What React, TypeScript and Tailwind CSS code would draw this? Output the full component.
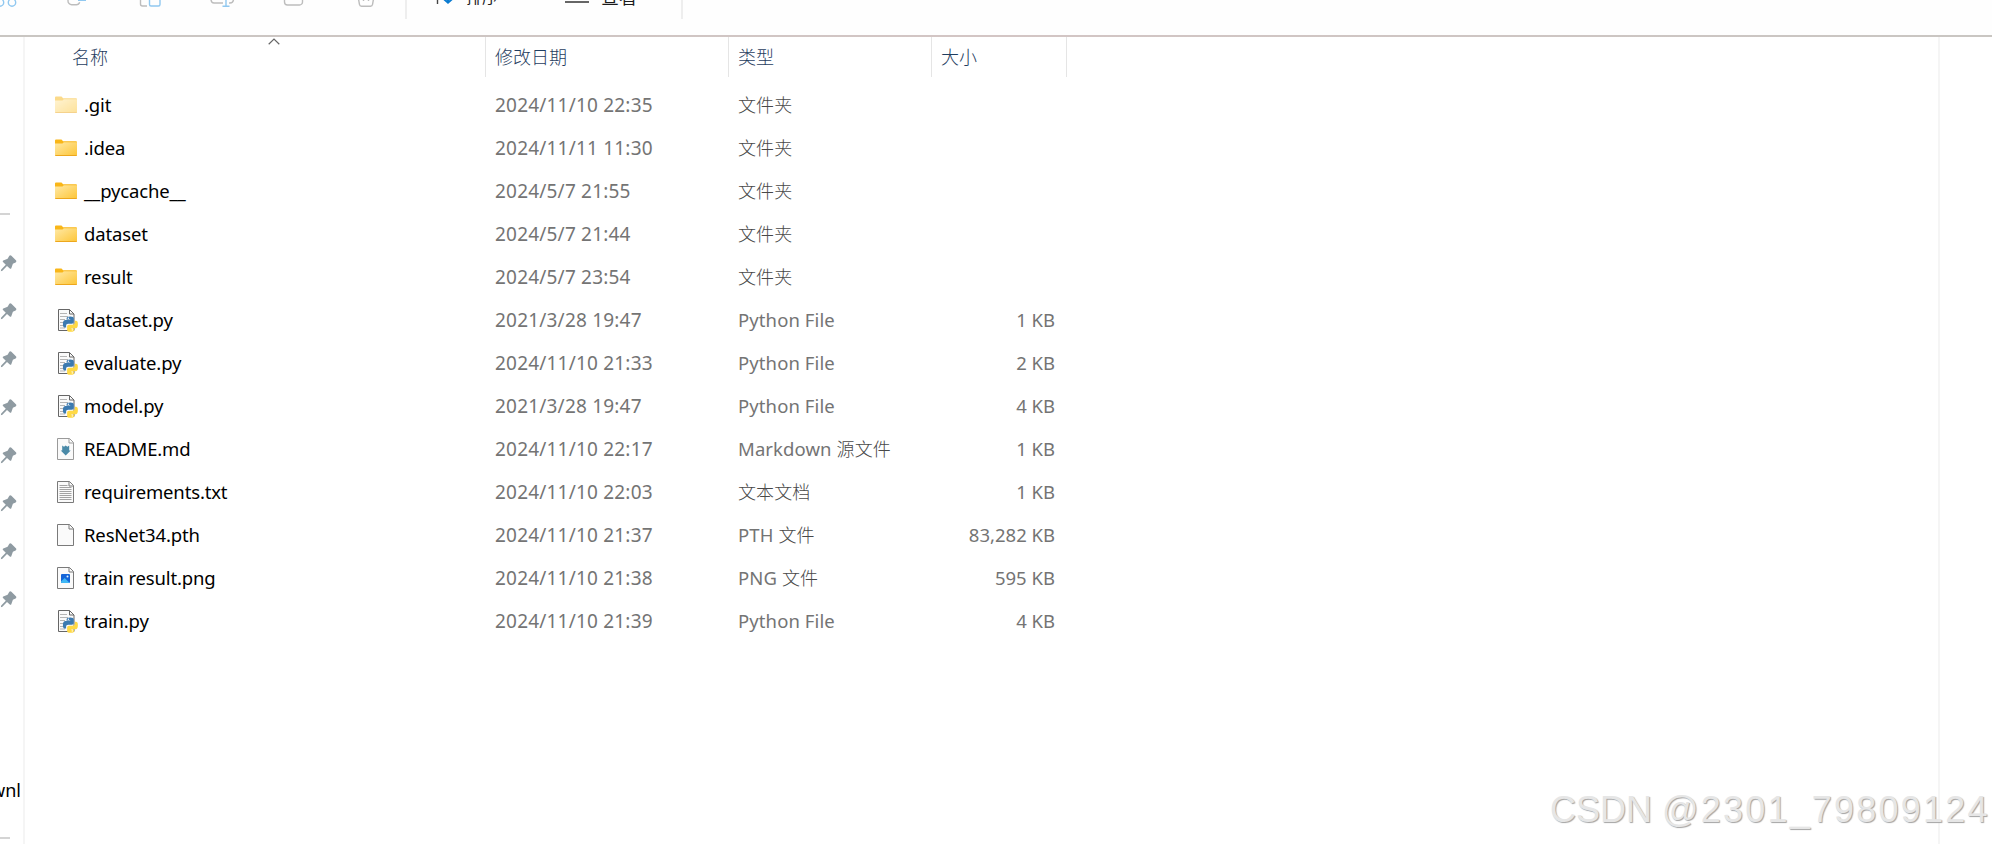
import React from "react";

type Kind = "folder" | "hidden" | "py" | "md" | "txt" | "blank" | "png";

type Entry = { name: string; date: string; type: string; suffix?: string; size?: string; kind: Kind };

const entries: Entry[] = [
  { name: ".git", date: "2024/11/10 22:35", type: "", suffix: "文件夹", kind: "hidden" },
  { name: ".idea", date: "2024/11/11 11:30", type: "", suffix: "文件夹", kind: "folder" },
  { name: "__pycache__", date: "2024/5/7 21:55", type: "", suffix: "文件夹", kind: "folder" },
  { name: "dataset", date: "2024/5/7 21:44", type: "", suffix: "文件夹", kind: "folder" },
  { name: "result", date: "2024/5/7 23:54", type: "", suffix: "文件夹", kind: "folder" },
  { name: "dataset.py", date: "2021/3/28 19:47", type: "Python File", size: "1 KB", kind: "py" },
  { name: "evaluate.py", date: "2024/11/10 21:33", type: "Python File", size: "2 KB", kind: "py" },
  { name: "model.py", date: "2021/3/28 19:47", type: "Python File", size: "4 KB", kind: "py" },
  { name: "README.md", date: "2024/11/10 22:17", type: "Markdown ", suffix: "源文件", size: "1 KB", kind: "md" },
  { name: "requirements.txt", date: "2024/11/10 22:03", type: "", suffix: "文本文档", size: "1 KB", kind: "txt" },
  { name: "ResNet34.pth", date: "2024/11/10 21:37", type: "PTH ", suffix: "文件", size: "83,282 KB", kind: "blank" },
  { name: "train result.png", date: "2024/11/10 21:38", type: "PNG ", suffix: "文件", size: "595 KB", kind: "png" },
  { name: "train.py", date: "2024/11/10 21:39", type: "Python File", size: "4 KB", kind: "py" },
];

function FolderIcon({ faded }: { faded: boolean }) {
  return (
    <svg width="24" height="24" viewBox="0 0 24 24" className={faded ? "opacity-50" : ""}>
      <defs>
        <linearGradient id="folder" x1="0" y1="0" x2="1" y2="1">
          <stop offset="0" stopColor="#ffe9a6" />
          <stop offset="1" stopColor="#fdc536" />
        </linearGradient>
      </defs>
      <path d="M1 4.500a1 1 0 0 1 1-1h5.500l1.600 1.800H22a1 1 0 0 1 1 1V12H1z" fill="#f9b618" />
      <path d="M1 7.600h7.500l1.300-1.300H23V19a1 1 0 0 1-1 1H2a1 1 0 0 1-1-1z" fill="url(#folder)" />
      <path d="M1 18.900h22a1.200 1.200 0 0 1-1.100 1.100H2.100A1.200 1.200 0 0 1 1 18.900z" fill="#eda71d" />
    </svg>
  );
}

function Page({ stroke = "#7a7a7a" }: { stroke?: string }) {
  return (
    <>
      <path d="M3.500 1.500h12l4 4v17h-16z" fill="#fafafa" stroke={stroke} />
      <path d="M15 1.500v4.500h4.500" fill="none" stroke={stroke} />
    </>
  );
}

function FileIcon({ kind }: { kind: Kind }) {
  if (kind === "folder" || kind === "hidden") return <FolderIcon faded={kind === "hidden"} />;
  if (kind === "py")
    return (
      <svg width="24" height="24" viewBox="0 0 24 24">
        <path d="M4.500 1.500h11l4.500 4.500v16.500H4.500z" fill="#fafafa" stroke="#666" />
        <path d="M15.500 1.500V6H20" fill="none" stroke="#666" />
        <path d="M6 5.500h7M6 8.500h8M6 11.500h5M6 14.500h4M6 17.500h4M6 20h5" stroke="#b5b5b5" />
        <path d="M12.600 11.700v-1.200c0-1.300 1-2 3.600-2s3.600.7 3.600 2v3.300c0 1.200-.9 2-2 2h-3.600c-1.400 0-2.100.8-2.100 2v1.700h-1.200c-1.300 0-2-1-2-3.600 0-2.900.9-4 2.600-4h4.700v-.5z" fill="#3c7ab0" />
        <path d="M20.900 12.800h1c1.300 0 2 1 2 3.400 0 2.700-.8 4-2.200 4h-4.400v.5h2.800v1.200c0 1.200-1 1.900-3.600 1.900-2.400 0-3.400-.7-3.400-1.900v-3c0-1.400.8-2.100 2-2.100h3.500c1.400 0 2.300-.9 2.300-2.200z" fill="#ffd945" />
        <circle cx="14.400" cy="10.200" r=".7" fill="#fff" />
        <circle cx="18.300" cy="21.900" r=".7" fill="#fff" />
      </svg>
    );
  return (
    <svg width="24" height="24" viewBox="0 0 24 24">
      <Page stroke={kind === "md" ? "#9a9a9a" : "#7a7a7a"} />
      {kind === "md" && (
        <path d="M8.200 8.500 10 9.700l1.700-1.200 1.700 1.200 1.800-1.200v5h1.500l-5 5-5-5h1.500z" fill="#4a8aa8" />
      )}
      {kind === "txt" && (
        <path d="M5.500 5.500h8M5.500 7.500h12M5.500 9.500h12M5.500 11.500h12M5.500 13.500h12M5.500 15.500h12M5.500 17.500h12M5.500 19.500h12" stroke="#a3a3a3" />
      )}
      {kind === "png" && (
        <>
          <rect x="7" y="8" width="9" height="9" rx="1" fill="#1565d8" />
          <path d="M7 15.500 10.700 12l5 5H8a1 1 0 0 1-1-1z" fill="#3fb8f5" />
          <circle cx="13.500" cy="10.500" r="1" fill="#e8f6ff" />
        </>
      )}
    </svg>
  );
}

function Pin() {
  return (
    <svg width="17" height="17" viewBox="0 0 17 17" className="block">
      <path d="M9.200.9c.6-.8 1.500-.8 2.200-.1l4.500 4.500c.7.700.5 1.700-.3 2.100l-2.700 1.400-1.600 4.400c-.2.700-1 .8-1.500.3L7 10.900 2.400 15.800l-1.600.5.400-1.700L5.800 9.700 3 6.900c-.5-.5-.3-1.300.3-1.500l4.300-1.700z" fill="#8f9ba2" />
    </svg>
  );
}

function Toolbar() {
  return (
    <div className="flex h-[35px] w-full shrink-0 items-start overflow-hidden bg-[#fefefe]">
      <svg width="400" height="8" viewBox="0 0 400 8" fill="none" strokeWidth="1.400" className="shrink-0">
        <g stroke="#90c8f0">
          <circle cx="0" cy="2.500" r="3.700" />
          <circle cx="12" cy="2.500" r="3.700" />
          <path d="M78 .3h8" />
          <rect x="149.500" y="-8" width="10.500" height="14" rx="1.500" />
          <path d="M226-4V6M222.500 6.200h7" />
        </g>
        <g stroke="#bdbdbd">
          <path d="M68-4v5a3.700 3.700 0 0 0 3.700 3.700H76a3.700 3.700 0 0 0 3.700-2.500" />
          <path d="M140.500-4v8a2 2 0 0 0 2 2H147" />
          <path d="M211-1c0 3 1 4 3 4h9M229 3h1c2.500 0 3.500-1 3.500-4" />
          <path d="M284.500-2v4a3 3 0 0 0 3 3h12a3 3 0 0 0 3-3v-4" />
          <path d="M358.500-1l1 5.500a2 2 0 0 0 2 1.700h9a2 2 0 0 0 2-1.700l1-5.500M363.500-1V1M368.500-1V1" />
        </g>
      </svg>
      <div className="ml-[5px] h-[19px] w-[2px] bg-[#eeeeee]" />
      <svg width="26" height="8" viewBox="0 0 26 8" className="ml-[27px] shrink-0">
        <path d="M3.500-2V4" stroke="#444" strokeWidth="1.400" />
        <path d="M10-1 14.500 3 19-1M14.500-2V3" transform="translate(-.5 -.3)" stroke="#0a7bd0" strokeWidth="2" fill="none" />
      </svg>
      <span className="-mt-[12px] ml-[6px] text-[16px] leading-[18px] text-[#1b1b1b]">排序</span>
      <div className="ml-[67px] mt-[1px] h-[2px] w-[24px] bg-[#666]" />
      <span className="-mt-[12px] ml-[12px] text-[18px] leading-[18px] text-[#1b1b1b]">查看</span>
      <div className="ml-[44px] h-[19px] w-[2px] bg-[#eeeeee]" />
    </div>
  );
}

export default function App() {
  return (
    <div className="relative flex h-[844px] w-[1992px] flex-col overflow-hidden bg-white font-['Noto_Sans','Noto_Sans_CJK_SC',sans-serif] text-[18px]">
      <Toolbar />
      <div className="h-[2px] shrink-0 bg-gradient-to-r from-[#c9c6c2] via-[#d3c5c4] to-[#c9c6c2]" />
      <div className="flex min-h-0 flex-1">
        <aside className="flex w-[25px] shrink-0 flex-col items-start overflow-hidden border-r-2 border-[#f5f5f5]">
          <div className="mt-[176px] h-[2px] w-[10px] shrink-0 bg-[#d4d4d4]" />
          <div className="mt-[40px] flex flex-col gap-[31px]">
            {Array.from({ length: 8 }, (_, i) => (
              <Pin key={i} />
            ))}
          </div>
          <div className="mt-[170px] flex h-6 w-[21px] shrink-0 justify-end overflow-hidden text-[18px] leading-6 text-black">
            <span>Downl</span>
          </div>
          <div className="mt-[35px] h-[2px] w-[10px] shrink-0 bg-[#d4d4d4]" />
        </aside>
        <main className="flex flex-1 flex-col">
          <div className="flex h-10 shrink-0 text-[18px] font-light leading-[41px] text-[#1f3d60]">
            <div className="relative w-[461px] border-r border-[#e5e5e5] pl-[47px]">
              名称
              <svg width="12" height="7" viewBox="0 0 12 7" className="absolute left-[243px] top-[1px]">
                <path d="M.7 6.200 6 1l5.300 5.200" fill="none" stroke="#666" strokeWidth="1.200" />
              </svg>
            </div>
            <div className="w-[243px] border-r border-[#e5e5e5] pl-[9px]">修改日期</div>
            <div className="w-[203px] border-r border-[#e5e5e5] pl-[9px]">类型</div>
            <div className="w-[135px] border-r border-[#e5e5e5] pl-[9px]">大小</div>
          </div>
          <div className="mt-[6px] flex flex-col">
            {entries.map((e) => (
              <div key={e.name} className="flex h-[43px] items-center whitespace-nowrap text-[18.5px] leading-[26px] text-[#747474]">
                <div className="flex w-[470px] items-center pl-[29px] text-black">
                  <FileIcon kind={e.kind} />
                  <span className="ml-[6px] tracking-[-0.15px]">{e.name}</span>
                </div>
                <div className="w-[243px] text-[19px] tracking-[0.2px]">{e.date}</div>
                <div className="w-[203px] tracking-[0.1px]">
                  {e.type}
                  {e.suffix && <span className="text-[18px] font-light text-[#484848]">{e.suffix}</span>}
                </div>
                <div className="w-[114px] text-right">{e.size}</div>
              </div>
            ))}
          </div>
        </main>
        <div className="w-[54px] shrink-0 border-l-2 border-[#f5f5f5]" />
      </div>
      <div className="absolute left-[1550px] top-[789px] whitespace-nowrap font-['Liberation_Sans',sans-serif] text-[36px] leading-[42px] text-[#e6e6e6] [text-shadow:1px_1px_1px_#a3a3a3]">
        <span>CSDN </span>
        <span className="tracking-[2.200px]">@2301_79809124</span>
      </div>
    </div>
  );
}
